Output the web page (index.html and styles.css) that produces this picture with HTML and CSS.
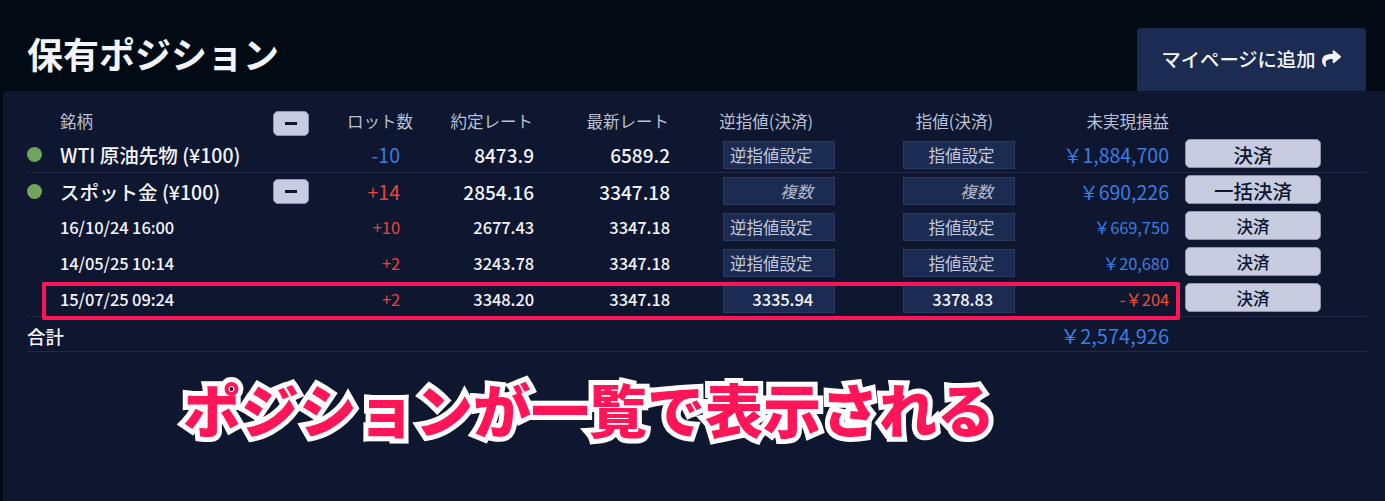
FILE: index.html
```html
<!DOCTYPE html>
<html lang="ja">

<head>
    <meta charset="UTF-8" />
    <title>保有ポジション</title>
    <!-- Styles -->
    <link rel="stylesheet" href="styles.css">
</head>

<body>
    <header class="top">
        <h1 class="title">保有ポジション</h1>
        <a class="add" href="#">マイページに追加
            <svg class="add-icon" viewBox="0 0 512 512"><path fill="currentColor" d="M503.691 189.836L327.687 37.851C312.281 24.546 288 35.347 288 56.015v80.053C127.371 137.907 0 170.1 0 322.326c0 61.441 39.581 122.309 83.333 154.132 13.653 9.931 33.111-2.533 28.077-18.631C66.066 312.814 132.917 274.316 288 272.085V360c0 20.7 24.3 31.453 39.687 18.164l176.004-152c11.071-9.562 11.086-26.753 0-36.328z"/></svg>
        </a>
    </header>

    <main class="panel">
        <div class="row head">
            <span></span>
            <span>銘柄</span>
            <button class="toggle"><i></i></button>
            <span class="num">ロット数</span>
            <span class="num">約定レート</span>
            <span class="num">最新レート</span>
            <span class="num order-head">逆指値(決済)</span>
            <span class="num order-head">指値(決済)</span>
            <span class="num">未実現損益</span>
            <span></span>
        </div>

        <div class="row parent line">
            <span class="dot"></span>
            <span class="name">WTI 原油先物 (¥100)</span>
            <span></span>
            <span class="num lot minus">-10</span>
            <span class="num rate">8473.9</span>
            <span class="num rate">6589.2</span>
            <a class="order">逆指値設定</a>
            <a class="order center">指値設定</a>
            <span class="num minus">￥1,884,700</span>
            <button class="settle">決済</button>
        </div>

        <div class="row parent">
            <span class="dot"></span>
            <span class="name">スポット金 (¥100)</span>
            <button class="toggle"><i></i></button>
            <span class="num lot plus">+14</span>
            <span class="num rate">2854.16</span>
            <span class="num rate">3347.18</span>
            <a class="order multi">複数</a>
            <a class="order multi">複数</a>
            <span class="num minus">￥690,226</span>
            <button class="settle">一括決済</button>
        </div>

        <div class="row child">
            <span></span>
            <span class="name">16/10/24 16:00</span>
            <span></span>
            <span class="num lot plus">+10</span>
            <span class="num rate">2677.43</span>
            <span class="num rate">3347.18</span>
            <a class="order">逆指値設定</a>
            <a class="order center">指値設定</a>
            <span class="num minus">￥669,750</span>
            <button class="settle">決済</button>
        </div>

        <div class="row child">
            <span></span>
            <span class="name">14/05/25 10:14</span>
            <span></span>
            <span class="num lot plus">+2</span>
            <span class="num rate">3243.78</span>
            <span class="num rate">3347.18</span>
            <a class="order">逆指値設定</a>
            <a class="order center">指値設定</a>
            <span class="num minus">￥20,680</span>
            <button class="settle">決済</button>
        </div>

        <div class="row child line">
            <span></span>
            <span class="name">15/07/25 09:24</span>
            <span></span>
            <span class="num lot plus">+2</span>
            <span class="num rate">3348.20</span>
            <span class="num rate">3347.18</span>
            <a class="order set">3335.94</a>
            <a class="order set">3378.83</a>
            <span class="num loss">-￥204</span>
            <button class="settle">決済</button>
            <div class="mark"></div>
        </div>

        <div class="row total line">
            <span class="total-label">合計</span>
            <span class="num minus total-sum">￥2,574,926</span>
        </div>

        <p class="note" data-text="ポジションが一覧で表示される">ポジションが一覧で表示される</p>
    </main>
</body>

</html>
```

FILE: styles.css
```css
* {
    margin: 0;
    padding: 0;
    box-sizing: border-box;
}

body {
    width: 1385px;
    height: 501px;
    overflow: hidden;
    padding-left: 3px;
    background: #020a14;
    color: #f2f4f8;
    font-family: "Noto Sans CJK JP", "Noto Sans", sans-serif;
}

.top {
    display: flex;
    justify-content: space-between;
    align-items: flex-end;
    height: 91px;
    padding: 0 19px 0 24px;
}

.title {
    font-size: 36px;
    line-height: 50px;
    font-weight: 700;
    padding-bottom: 13px;
}

.add {
    display: flex;
    align-items: center;
    justify-content: center;
    gap: 7px;
    width: 229px;
    height: 63px;
    border-radius: 4px 4px 0 0;
    background: #1c2b52;
    color: #f2f4f8;
    font-size: 19.3px;
    font-weight: 500;
    text-decoration: none;
    padding-bottom: 2px;
}

.add-icon {
    width: 19px;
    height: 19px;
}

.panel {
    position: relative;
    height: 410px;
    padding: 10px 19px 0 24px;
    border-radius: 4px 0 0 0;
    background: #0e1630;
}

.row {
    position: relative;
    display: grid;
    grid-template-columns: 33px 213px 36px 104px 120px 136px 166px 180px 154px 152px 45px;
    align-items: center;
    height: 36px;
}

.line {
    border-bottom: 1px solid #212944;
}

.head {
    color: #b9c0d4;
    font-size: 16.5px;
    padding-top: 4px;
}

.head .toggle {
    margin-top: 5px;
}

.num {
    text-align: right;
}

.rate {
    margin-right: -1px;
}

.parent .rate {
    font-size: 19px;
}

.order-head {
    padding-right: 22px;
}

.dot {
    width: 15px;
    height: 15px;
    border-radius: 50%;
    background: #6fa65c;
}

.parent {
    font-size: 19.5px;
    font-weight: 500;
}

.child {
    font-size: 16.5px;
    font-weight: 500;
    letter-spacing: -0.1px;
}

.lot {
    padding-right: 13px;
    font-weight: 400;
}

.minus {
    color: #3b7de0;
    font-weight: 400;
}

.plus {
    color: #e8443a;
}

.loss {
    color: #e8503a;
    font-weight: 400;
}

.toggle {
    display: flex;
    align-items: center;
    justify-content: center;
    width: 36px;
    height: 25px;
    border: 1px solid #8d94ad;
    border-radius: 5px;
    background: #c7cce0;
}

.toggle i {
    display: block;
    width: 12px;
    height: 3px;
    background: #0e1630;
}

.order {
    justify-self: end;
    width: 112px;
    height: 28px;
    padding-left: 6px;
    border: 1px solid #2a3a63;
    background: #1c2b52;
    color: #c2c8da;
    font-size: 16.5px;
    font-weight: 400;
    line-height: 26px;
    letter-spacing: 0;
}

.center {
    text-align: center;
    padding-left: 5px;
}

.multi {
    padding: 0 21px 0 0;
    text-align: right;
    font-style: italic;
    color: #b4bacf;
}

.set {
    padding: 0 21px 0 0;
    text-align: right;
    color: #f2f4f8;
    font-weight: 500;
    letter-spacing: -0.1px;
}

.settle {
    align-self: start;
    justify-self: end;
    width: 136px;
    height: 29px;
    margin-top: 2px;
    border: 1px solid #8d94ad;
    border-radius: 5px;
    background: #c7cce0;
    color: #0e1630;
    font-family: inherit;
    font-size: 16.5px;
    font-weight: 500;
    letter-spacing: 0;
}

.parent .settle {
    font-size: 19.5px;
}

.mark {
    position: absolute;
    left: 15px;
    top: 1px;
    width: 1138px;
    height: 38px;
    border: 4px solid #ff1558;
    border-radius: 2px;
}

.total {
    height: 35px;
    padding-top: 3px;
    font-size: 18.5px;
    font-weight: 500;
}

.total-label {
    grid-column: 1 / 3;
}

.total-sum {
    grid-column: 8 / 10;
    font-size: 20px;
}

.note {
    position: absolute;
    left: 180px;
    top: 275px;
    color: #ff1558;
    font-size: 58px;
    font-weight: 900;
    line-height: 84px;
    white-space: nowrap;
    -webkit-text-stroke: 10px #fff;
    text-shadow: 0 0 4px rgba(0, 0, 0, 0.4);
}

/* fill drawn again on top so the outline does not eat the glyph */
.note::after {
    content: attr(data-text);
    position: absolute;
    left: 0;
    top: 0;
    -webkit-text-stroke: 0;
    text-shadow: none;
}
```
